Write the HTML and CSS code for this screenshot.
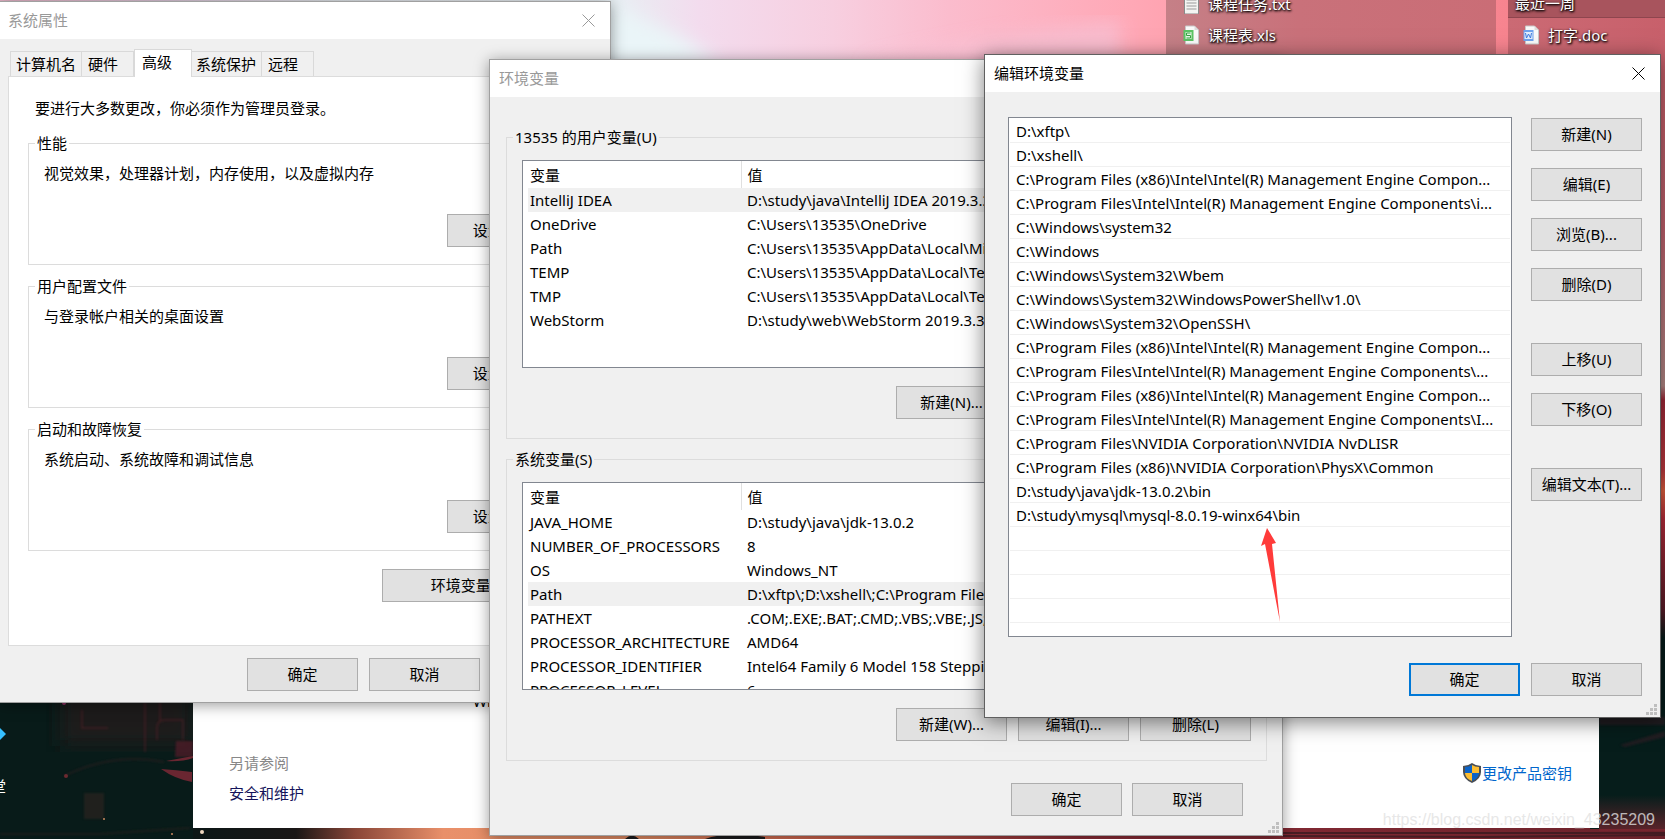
FILE: index.html
```html
<!DOCTYPE html>
<html lang="zh-CN">
<head>
<meta charset="utf-8">
<title>环境变量</title>
<link rel="stylesheet" href="styles.css">
</head>
<body>
<main class="desktop">
  <svg class="wallpaper" viewBox="0 0 1665 839" preserveAspectRatio="none" aria-hidden="true">
    <defs>
      <linearGradient id="sky" x1="0" y1="0" x2="1" y2="0">
        <stop offset="0" stop-color="#e6b3c6"/>
        <stop offset=".1" stop-color="#d9c4d6"/>
        <stop offset=".2" stop-color="#dfe3e8"/>
        <stop offset=".37" stop-color="#e8eef3"/>
        <stop offset=".42" stop-color="#f3dcee"/>
        <stop offset=".5" stop-color="#f7cfe0"/>
        <stop offset=".57" stop-color="#fbbccd"/>
        <stop offset=".68" stop-color="#ffa8b6"/>
        <stop offset=".8" stop-color="#ff8f99"/>
        <stop offset="1" stop-color="#f07a86"/>
      </linearGradient>
      <linearGradient id="side" x1="0" y1="0" x2="0" y2="1">
        <stop offset="0" stop-color="#b8606c"/>
        <stop offset=".25" stop-color="#c4626e"/>
        <stop offset=".48" stop-color="#b58a88"/>
        <stop offset=".5" stop-color="#a02838"/>
        <stop offset=".6" stop-color="#c03a40"/>
        <stop offset=".63" stop-color="#e0603f"/>
        <stop offset=".67" stop-color="#b82c3c"/>
        <stop offset=".8" stop-color="#5a1c28"/>
        <stop offset=".84" stop-color="#061c1a"/>
        <stop offset="1" stop-color="#061c1a"/>
      </linearGradient>
      <linearGradient id="glow" x1="0" y1="0" x2="1" y2="0">
        <stop offset="0" stop-color="#0c1716"/>
        <stop offset=".07" stop-color="#1a1716"/>
        <stop offset=".11" stop-color="#8a4638"/>
        <stop offset=".17" stop-color="#e9906a"/>
        <stop offset=".3" stop-color="#e08a62"/>
        <stop offset=".45" stop-color="#c85a48"/>
        <stop offset=".6" stop-color="#8c2c36"/>
        <stop offset="1" stop-color="#6b222b"/>
      </linearGradient>
      <linearGradient id="haze" x1="0" y1="0" x2="0" y2="1">
        <stop offset="0" stop-color="#7a2630" stop-opacity="0"/>
        <stop offset="1" stop-color="#7a2630" stop-opacity=".75"/>
      </linearGradient>
      <filter id="soft"><feGaussianBlur stdDeviation="9"/></filter>
      <filter id="smudge"><feGaussianBlur stdDeviation="1"/></filter>
    </defs>
    <rect width="1665" height="700" fill="url(#sky)"/>
    <path d="M600 0C640 20 680 30 720 64H600z" fill="#eaf5f8" filter="url(#soft)"/>
    <path d="M860 64q120-30 260-44v44z" fill="#f7c3d6" opacity=".7" filter="url(#soft)"/>
    <rect x="1655" y="50" width="10" height="700" fill="url(#side)"/>
    <rect y="690" width="200" height="149" fill="#081b19"/>
    <path d="M60 690h133v56H60z" fill="#251a1b" opacity=".7" filter="url(#soft)"/>
    <g fill="none" stroke="#5a2028" stroke-width="2" opacity=".45" filter="url(#smudge)">
      <path d="M82 710v18h26M145 702v50M157 740v-12q0-8 8-8h18v20M160 702v20"/>
      <path d="M64 776q50-24 100-14" stroke="#3a2024"/>
      <path d="M0 834h100l90-6" stroke="#31201f"/>
    </g>
    <path d="M176 741h17v16h-18z" fill="#571c2a" opacity=".7" filter="url(#smudge)"/>
    <path d="M166 761q16 1 27-3v-2M161 769q14 10 31 13v-10q-16-2-31-3" fill="#6a2631"/>
    <path d="M84 793h20v26H84z" fill="#372523" opacity=".5" filter="url(#smudge)"/>
    <g fill="#c88a60"><circle cx="104" cy="819" r="1"/><circle cx="172" cy="834" r="1"/><circle cx="64" cy="703" r="2" fill="#8b3060"/><circle cx="66" cy="776" r="2" fill="#6b2a30"/></g>
    <rect y="826" x="193" width="1472" height="13" fill="url(#glow)"/>
    <path d="M625 839q7-7 14 0M705 839q20-8 60-2v2" fill="#1b1a1c"/>
    <circle cx="202" cy="832" r="2" fill="#f0d8c0"/>
    <rect x="1590" y="717" width="75" height="112" fill="#061d1b"/>
    <path d="M1599 717h66v8h-66zM1620 745l45-14v6l-40 10z" fill="#3b1d25" opacity=".5" filter="url(#smudge)"/>
    <rect x="1599" y="795" width="66" height="36" fill="url(#haze)"/>
    <path d="M1283 833h382M1283 836l200 1 182-2" fill="none" stroke="#3a1a20" stroke-width="2" opacity=".8"/>
    <path d="M0 728l6 6-6 6z" fill="#35c0ff"/>
  </svg>

  <section class="shelf shelf-files" aria-label="文件">
    <p class="file"><svg class="file-icon" viewBox="0 0 16 20"><path d="M1 0h14v20H1z" fill="#f4f4f2" stroke="#8a8a8a"/><path d="M3 6h10M3 9h10M3 12h10M3 15h10" stroke="#9a9a9a"/></svg>课程任务.txt</p>
    <p class="file"><svg class="file-icon" viewBox="0 0 16 20"><path d="M2 1h9l4 4v14H2z" fill="#fafafa" stroke="#c8c8c8"/><path d="M11 1v4h4" fill="#ddd"/><path d="M0 5h10v11H0z" fill="#5cc465"/><path d="M2 7h6v7H2z" fill="#e4f6e5"/><path d="M7 8H3v2.500h4V13H3" fill="none" stroke="#35a540"/></svg>课程表.xls</p>
  </section>
  <section class="shelf shelf-recent" aria-label="最近">
    <h2 class="shelf-title">最近一周</h2>
    <p class="file"><svg class="file-icon" viewBox="0 0 16 20"><path d="M2 1h9l4 4v14H2z" fill="#fafafa" stroke="#c8c8c8"/><path d="M11 1v4h4" fill="#ddd"/><path d="M0 5h10v11H0z" fill="#6fa3ee"/><path d="M1 7h8v7H1z" fill="#e3eefd"/><path d="M2 8l1 5 2-4 2 4 1-5" fill="none" stroke="#3c7be0"/></svg>打字.doc</p>
  </section>
  <span class="desktop-label">学堂</span>

  <section class="window system" aria-label="系统">
    <p class="edition">Windows</p>
    <div class="see-also">
      <p class="muted">另请参阅</p>
      <a class="navy" href="#security">安全和维护</a>
    </div>
    <a class="key-link" href="#key"><svg class="shield" viewBox="0 0 18 20"><path d="M9 0Q5 3 0 3v6q0 7 9 11 9-4 9-11V3Q13 3 9 0z" fill="#4b4f55"/><path d="M9 2Q6 4 2 4v6h7z" fill="#0b63c8"/><path d="M9 2q3 2 7 2v6H9z" fill="#fdbd30"/><path d="M2 10h7v8q-7-3-7-8z" fill="#fdbd30"/><path d="M9 10h7q0 5-7 8z" fill="#0b63c8"/></svg>更改产品密钥</a>
  </section>

  <section class="window props" aria-label="系统属性">
    <header class="titlebar inactive"><h1 class="title">系统属性</h1><button class="close" type="button" aria-label="关闭"><svg class="cross" viewBox="0 0 13 13"><path d="M.5.5l12 12M12.5.5l-12 12"/></svg></button></header>
    <div class="tabs" role="tablist">
      <button class="tab tab-name" type="button" role="tab">计算机名</button>
      <button class="tab tab-hw" type="button" role="tab">硬件</button>
      <button class="tab tab-on" type="button" role="tab" aria-selected="true">高级</button>
      <button class="tab tab-guard" type="button" role="tab">系统保护</button>
      <button class="tab tab-remote" type="button" role="tab">远程</button>
    </div>
    <div class="panel" role="tabpanel">
      <p class="notice">要进行大多数更改，你必须作为管理员登录。</p>
      <fieldset class="group"><legend>性能</legend><p>视觉效果，处理器计划，内存使用，以及虚拟内存</p><button class="btn" type="button">设置(S)...</button></fieldset>
      <fieldset class="group"><legend>用户配置文件</legend><p>与登录帐户相关的桌面设置</p><button class="btn" type="button">设置(E)...</button></fieldset>
      <fieldset class="group"><legend>启动和故障恢复</legend><p>系统启动、系统故障和调试信息</p><button class="btn" type="button">设置(T)...</button></fieldset>
      <button class="btn btn-wide" type="button">环境变量(N)...</button>
    </div>
    <footer class="actions"><button class="btn" type="button">确定</button><button class="btn" type="button">取消</button><button class="btn" type="button">应用(A)</button></footer>
  </section>

  <section class="window vars" aria-label="环境变量">
    <header class="titlebar inactive"><h1 class="title">环境变量</h1></header>
    <div class="vars-body">
      <fieldset class="vargroup"><legend>13535 的用户变量(U)</legend>
        <div class="listbox">
          <table class="vartable">
            <thead><tr><th class="col-name">变量</th><th>值</th></tr></thead>
            <tbody>
              <tr class="selected"><td>IntelliJ IDEA</td><td>D:\study\java\IntelliJ IDEA 2019.3.3\bin;</td></tr>
              <tr><td>OneDrive</td><td>C:\Users\13535\OneDrive</td></tr>
              <tr><td>Path</td><td>C:\Users\13535\AppData\Local\Microsoft\WindowsApps;</td></tr>
              <tr><td>TEMP</td><td>C:\Users\13535\AppData\Local\Temp</td></tr>
              <tr><td>TMP</td><td>C:\Users\13535\AppData\Local\Temp</td></tr>
              <tr><td>WebStorm</td><td>D:\study\web\WebStorm 2019.3.3\bin;</td></tr>
            </tbody>
          </table>
        </div>
        <div class="row-buttons"><button class="btn" type="button">新建(N)...</button><button class="btn" type="button">编辑(E)...</button><button class="btn" type="button">删除(D)</button></div>
      </fieldset>
      <fieldset class="vargroup"><legend>系统变量(S)</legend>
        <div class="listbox">
          <table class="vartable">
            <thead><tr><th class="col-name">变量</th><th>值</th></tr></thead>
            <tbody>
              <tr><td>JAVA_HOME</td><td>D:\study\java\jdk-13.0.2</td></tr>
              <tr><td>NUMBER_OF_PROCESSORS</td><td>8</td></tr>
              <tr><td>OS</td><td>Windows_NT</td></tr>
              <tr class="selected"><td>Path</td><td>D:\xftp\;D:\xshell\;C:\Program Files (x86)\Intel</td></tr>
              <tr><td>PATHEXT</td><td>.COM;.EXE;.BAT;.CMD;.VBS;.VBE;.JS;.JSE</td></tr>
              <tr><td>PROCESSOR_ARCHITECTURE</td><td>AMD64</td></tr>
              <tr><td>PROCESSOR_IDENTIFIER</td><td>Intel64 Family 6 Model 158 Stepping 10</td></tr>
              <tr><td>PROCESSOR_LEVEL</td><td>6</td></tr>
            </tbody>
          </table>
        </div>
        <div class="row-buttons"><button class="btn" type="button">新建(W)...</button><button class="btn" type="button">编辑(I)...</button><button class="btn" type="button">删除(L)</button></div>
      </fieldset>
      <footer class="vars-actions"><button class="btn" type="button">确定</button><button class="btn" type="button">取消</button></footer>
    </div>
    <svg class="grip" viewBox="0 0 11 11"><path d="M8 0h3v3H8zM4 4h3v3H4zM8 4h3v3H8zM0 8h3v3H0zM4 8h3v3H4zM8 8h3v3H8z"/></svg>
  </section>

  <section class="window edit" aria-label="编辑环境变量">
    <header class="titlebar"><h1 class="title">编辑环境变量</h1><button class="close" type="button" aria-label="关闭"><svg class="cross" viewBox="0 0 13 13"><path d="M.5.5l12 12M12.5.5l-12 12"/></svg></button></header>
    <div class="edit-body">
      <ul class="paths">
        <li>D:\xftp\</li>
        <li>D:\xshell\</li>
        <li>C:\Program Files (x86)\Intel\Intel(R) Management Engine Compon...</li>
        <li>C:\Program Files\Intel\Intel(R) Management Engine Components\i...</li>
        <li>C:\Windows\system32</li>
        <li>C:\Windows</li>
        <li>C:\Windows\System32\Wbem</li>
        <li>C:\Windows\System32\WindowsPowerShell\v1.0\</li>
        <li>C:\Windows\System32\OpenSSH\</li>
        <li>C:\Program Files (x86)\Intel\Intel(R) Management Engine Compon...</li>
        <li>C:\Program Files\Intel\Intel(R) Management Engine Components\...</li>
        <li>C:\Program Files (x86)\Intel\Intel(R) Management Engine Compon...</li>
        <li>C:\Program Files\Intel\Intel(R) Management Engine Components\I...</li>
        <li>C:\Program Files\NVIDIA Corporation\NVIDIA NvDLISR</li>
        <li>C:\Program Files (x86)\NVIDIA Corporation\PhysX\Common</li>
        <li>D:\study\java\jdk-13.0.2\bin</li>
        <li>D:\study\mysql\mysql-8.0.19-winx64\bin</li>
        <li></li><li></li><li></li><li></li>
      </ul>
      <div class="side-buttons">
        <button class="btn" type="button">新建(N)</button>
        <button class="btn" type="button">编辑(E)</button>
        <button class="btn" type="button">浏览(B)...</button>
        <button class="btn" type="button">删除(D)</button>
        <button class="btn spaced" type="button">上移(U)</button>
        <button class="btn" type="button">下移(O)</button>
        <button class="btn spaced" type="button">编辑文本(T)...</button>
      </div>
    </div>
    <footer class="edit-actions"><button class="btn btn-default" type="button">确定</button><button class="btn" type="button">取消</button></footer>
    <svg class="grip" viewBox="0 0 11 11"><path d="M8 0h3v3H8zM4 4h3v3H4zM8 4h3v3H8zM0 8h3v3H0zM4 8h3v3H4zM8 8h3v3H8z"/></svg>
    <svg class="arrow" viewBox="0 0 22 95"><path d="M7 0l9 15-4 1 8 78L5 16l-4 2z" fill="#ff3b3a"/></svg>
  </section>

  <span class="watermark">https://blog.csdn.net/weixin_43235209</span>
</main>
</body>
</html>
```
FILE: styles.css
```css
* { box-sizing: border-box; }

body {
  margin: 0;
  font-family: "Noto Sans", "Noto Sans CJK SC", sans-serif;
  font-size: 15px;
  line-height: 20px;
  color: #000;
}

h1, h2, p, ul { margin: 0; padding: 0; font-size: 15px; font-weight: 400; }
button { font: inherit; color: inherit; }
a { text-decoration: none; }

.desktop {
  position: relative;
  height: 100vh;
  overflow: hidden;
  background: #0a1a19;
}

.wallpaper { position: absolute; inset: 0; width: 100%; height: 100%; }

/* desktop shelves */
.shelf {
  position: absolute;
  top: 0;
  height: 140px;
  color: #fff;
  text-shadow: 1px 1px 2px #000, 0 1px 3px #000;
}
.shelf-files {
  left: 1166px;
  width: 330px;
  padding-left: 17px;
  background: linear-gradient(90deg, #c58087, #c9717a 40%, #ca6d76);
}
.shelf-recent {
  left: 1508px;
  right: 0;
  background: linear-gradient(90deg, #cb6a74, #c8606b);
}
.file { display: flex; align-items: center; gap: 8px; height: 31px; }
.shelf-files .file:first-child { margin-top: -12px; }
.shelf-title {
  height: 18px;
  padding-left: 7px;
  line-height: 6px;
  background: #a8545d;
  border-bottom: 1px solid #8e454e;
}
.shelf-recent .file { height: 34px; padding-left: 15px; }
.file-icon { width: 17px; height: 20px; }
.desktop-label {
  position: absolute;
  left: -24px;
  top: 776px;
  color: #fff;
}

/* windows */
.window {
  position: absolute;
  background: #f0f0f0;
  border: 1px solid #a0a0a0;
  box-shadow: 0 2px 14px rgba(0, 0, 0, .4);
}
.titlebar {
  display: flex;
  align-items: center;
  justify-content: space-between;
  height: 37px;
  padding: 0 15px 0 9px;
  background: #fff;
}
.title { padding-bottom: 2px; }
.inactive { color: #999; }
.close { display: flex; padding: 0; border: 0; background: none; }
.cross { width: 13px; height: 13px; fill: none; stroke: currentColor; }

.btn {
  width: 111px;
  height: 33px;
  padding: 0 0 2px;
  border: 1px solid #adadad;
  background: #e1e1e1;
  white-space: nowrap;
}
.btn-default { border: 2px solid #0078d7; }

fieldset {
  margin: 0;
  min-width: 0;
  border: 1px solid #dcdcdc;
}
legend { padding: 0 2px; line-height: 20px; }

.grip { position: absolute; right: 3px; bottom: 2px; width: 11px; height: 11px; fill: #bfbfbf; }

/* system page behind the dialogs */
.system {
  left: 193px;
  top: 300px;
  width: 1406px;
  height: 528px;
  padding: 0 36px;
  display: flex;
  align-items: flex-end;
  justify-content: space-between;
  background: #fff;
  border: 0;
  box-shadow: none;
}
.edition { position: absolute; left: 280px; top: 391px; }
.see-also { display: flex; flex-direction: column; gap: 10px; padding-bottom: 25px; }
.muted { color: #888; }
.navy { color: #14145a; }
.key-link {
  display: flex;
  align-items: center;
  gap: 1px;
  margin-right: -9px;
  padding-bottom: 45px;
  color: #0066cc;
}
.shield { width: 18px; height: 20px; }

/* system properties */
.props { left: -1px; top: 1px; width: 612px; }
.props .titlebar { padding-left: 8px; }
.tabs { display: flex; align-items: flex-end; height: 37px; padding-left: 10px; }
.tab {
  height: 25px;
  padding: 0 0 0 6px;
  text-align: left;
  white-space: nowrap;
  border: 1px solid #d9d9d9;
  border-width: 1px 1px 0 0;
  background: #f0f0f0;
}
.tab-name { width: 72px; padding-left: 5px; border-left-width: 1px; }
.tab-hw { width: 52px; }
.tab-on {
  position: relative;
  width: 58px;
  height: 28px;
  margin-bottom: -1px;
  padding: 0 0 3px 7px;
  border-left-width: 1px;
  background: #fff;
}
.tab-guard { width: 70px; padding-left: 4px; }
.tab-remote { width: 52px; }
.panel {
  display: flex;
  flex-direction: column;
  margin: 0 8px;
  padding: 21px 19px 43px;
  background: #fff;
  border: 1px solid #dcdcdc;
}
.notice { padding: 0 0 15px 7px; }
.group {
  display: flex;
  flex-direction: column;
  margin-bottom: 11px;
  padding: 10px 15px 17px 6px;
}
.group p { padding-left: 9px; margin-bottom: 31px; }
.group .btn { align-self: flex-end; margin-right: 8px; }
.btn-wide { align-self: flex-end; width: 190px; margin: 7px 10px 0 0; }
.actions { display: flex; justify-content: flex-end; gap: 11px; padding: 12px 8px 11px; }

/* environment variables */
.vars { left: 489px; top: 59px; width: 794px; }
.vars-body { padding: 30px 15px 19px 16px; }
.vargroup { padding: 13px 15px 19px; }
.vargroup + .vargroup { margin-top: 10px; }
.vargroup legend { margin-left: -9px; }
.listbox {
  height: 208px;
  padding-left: 5px;
  overflow: hidden;
  background: #fff;
  border: 1px solid #828790;
}
.vartable { width: 100%; table-layout: fixed; border-collapse: collapse; white-space: nowrap; }
.vartable th { height: 27px; padding: 0 6px; font-weight: 400; text-align: left; }
.vartable td { height: 24px; padding: 0 6px; }
.vartable th:first-child, .vartable td:first-child { padding: 0 0 0 2px; }
.vartable .col-name { width: 213px; border-right: 1px solid #e0e0e0; }
.selected { background: #f0f0f0; }
.row-buttons { display: flex; justify-content: flex-end; gap: 11px; margin-top: 18px; }
.vars-actions { display: flex; justify-content: flex-end; gap: 10px; padding: 22px 24px 0 0; }

/* edit environment variable */
.edit {
  left: 984px;
  top: 54px;
  width: 677px;
  border-color: #606060;
  box-shadow: 0 4px 20px rgba(0, 0, 0, .5);
}
.edit-body { display: flex; gap: 19px; padding: 25px 18px 0 23px; }
.paths {
  flex: 1;
  min-width: 0;
  padding: 1px 1px 13px;
  list-style: none;
  background: #fff;
  border: 1px solid #828790;
}
.paths li {
  height: 24px;
  padding-left: 6px;
  line-height: 24px;
  white-space: nowrap;
  border-bottom: 1px solid #f0f0f0;
}
.side-buttons { display: flex; flex-direction: column; gap: 17px; padding-top: 1px; }
.spaced { margin-top: 25px; }
.edit-actions { display: flex; justify-content: flex-end; gap: 11px; padding: 26px 18px 21px; }
.arrow { position: absolute; left: 275px; top: 473px; width: 22px; height: 95px; }

.watermark {
  position: absolute;
  right: 10px;
  bottom: 9px;
  font-family: "Liberation Sans", sans-serif;
  font-size: 16px;
  color: rgba(225, 225, 225, .8);
}
```
